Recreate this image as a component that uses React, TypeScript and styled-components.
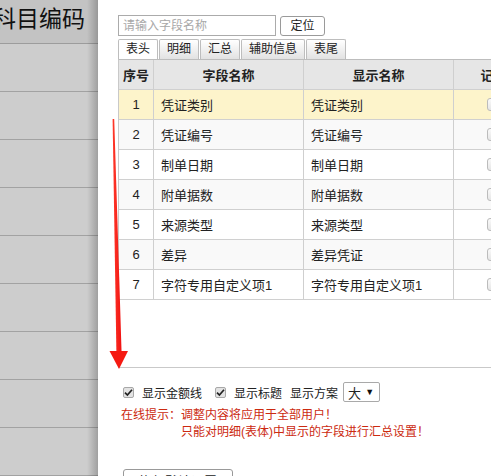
import React from "react";
import styled, { createGlobalStyle } from "styled-components";

const GlobalStyle = createGlobalStyle`
  html, body { margin: 0; padding: 0; overflow: hidden; background: #fff; }
  body {
    font-family: "Liberation Sans", "Noto Sans CJK SC", sans-serif;
    color: #222;
  }
  * { box-sizing: border-box; }
`;

const Page = styled.div`
  position: relative;
  display: flex;
  width: 491px;
  height: 476px;
  overflow: hidden;
`;

const Backdrop = styled.div`
  position: relative;
  width: 98px;
  flex-shrink: 0;
  background: #cdcdcd;
  display: flex;
  flex-direction: column;
  &::after {
    content: "";
    position: absolute;
    top: 0;
    right: 0;
    bottom: 0;
    width: 11px;
    background: linear-gradient(to right, rgba(0, 0, 0, 0), rgba(0, 0, 0, 0.22));
  }
`;

const BackTitle = styled.div`
  height: 58px;
  background: #c3c3c3;
  border-bottom: 1px solid #9c9c9c;
  font-family: "Noto Sans CJK SC", sans-serif;
  font-size: 23px;
  line-height: 34px;
  color: #111;
  white-space: nowrap;
  overflow: hidden;
  text-indent: -7px;
`;

const BackRow = styled.div`
  height: 48px;
  flex-shrink: 0;
  border-bottom: 1px solid #a2a2a2;
`;

const Dialog = styled.div`
  flex: 1;
  background: #fff;
  padding: 15px 0 0 20px;
  overflow: hidden;
  display: flex;
  flex-direction: column;
`;

const SearchRow = styled.div`
  display: flex;
  align-items: flex-start;
  gap: 4px;
  height: 21px;
`;

const SearchInput = styled.input`
  width: 158px;
  height: 21px;
  border: 1px solid #ababab;
  padding: 0 4px;
  font-family: "Liberation Sans", "Noto Sans CJK SC", sans-serif;
  font-size: 12px;
  outline: none;
  &::placeholder { color: #a8a8a8; }
`;

const LocateButton = styled.button`
  margin-top: 1px;
  width: 45px;
  height: 20px;
  border: 1px solid #9a9a9a;
  border-radius: 3px;
  background: #fff;
  font-family: "Liberation Sans", "Noto Sans CJK SC", sans-serif;
  font-size: 12px;
  color: #222;
  padding: 0;
  line-height: 18px;
`;

const TabBar = styled.div`
  display: flex;
  gap: 1px;
  margin-top: 3px;
  height: 21px;
  align-items: flex-end;
`;

const Tab = styled.div<{ $active?: boolean }>`
  height: 20px;
  padding: 0 7px;
  border: 1px solid #bdbdbd;
  border-bottom: none;
  border-radius: 2px 2px 0 0;
  font-size: 12px;
  line-height: 19px;
  color: #222;
  background: ${(p) => (p.$active ? "#fff" : "linear-gradient(#ffffff, #e2e2e2)")};
`;

const TableBox = styled.div`
  width: 420px;
  height: 309px;
  border: 1px solid #c9c9c9;
  border-top: 1px solid #bdbdbd;
  flex-shrink: 0;
`;

const Row = styled.div<{ $bg?: string }>`
  display: grid;
  grid-template-columns: 35px 150px 150px 80px;
  height: 30px;
  background: ${(p) => p.$bg || "#fff"};
  border-bottom: 1px solid #d0d0d0;
`;

const Cell = styled.div<{ $center?: boolean; $head?: boolean }>`
  border-right: 1px solid #cfcfcf;
  display: flex;
  align-items: center;
  justify-content: ${(p) => (p.$center ? "center" : "flex-start")};
  padding-left: ${(p) => (p.$center ? 0 : 7)}px;
  font-size: 13px;
  font-weight: ${(p) => (p.$head ? 700 : 400)};
  color: #222;
  white-space: nowrap;
  overflow: hidden;
`;

const GrayBox = styled.span`
  display: inline-block;
  width: 13px;
  height: 13px;
  border: 1px solid #bcbcbc;
  border-radius: 3px;
  background: linear-gradient(#fafafa, #e6e6e6);
`;

const Options = styled.div`
  display: flex;
  align-items: center;
  height: 20px;
  margin-top: 14px;
  padding-left: 5px;
  font-size: 12px;
  color: #222;
`;

const CheckBox = styled.span`
  display: inline-flex;
  align-items: center;
  justify-content: center;
  width: 11px;
  height: 11px;
  border: 1px solid #a8a8a8;
  border-radius: 2px;
  background: #e3e3e3;
  margin-right: 8px;
`;

const OptLabel = styled.span<{ $gap: number }>`
  margin-right: ${(p) => p.$gap}px;
  white-space: nowrap;
`;

const Select = styled.div`
  display: flex;
  align-items: center;
  justify-content: space-between;
  width: 37px;
  height: 20px;
  border: 1px solid #a9a9a9;
  border-radius: 2px;
  padding: 0 5px 0 4px;
  font-size: 13px;
`;

const Caret = styled.span`
  font-size: 9px;
  color: #111;
`;

const Tips = styled.div`
  margin-top: 5px;
  padding-left: 3px;
  font-size: 12px;
  line-height: 17px;
  color: #cc2a10;
`;

const TipLine = styled.div<{ $indent?: number }>`
  padding-left: ${(p) => p.$indent || 0}px;
  white-space: nowrap;
`;

const ResetButton = styled.button`
  margin-top: 28px;
  margin-left: 5px;
  width: 110px;
  height: 26px;
  border: 1px solid #999;
  border-radius: 3px;
  background: #fff;
  font-family: "Liberation Sans", "Noto Sans CJK SC", sans-serif;
  font-size: 13px;
  color: #222;
  padding: 0;
  text-align: center;
  line-height: 24px;
  flex-shrink: 0;
`;

const Arrow = styled.svg`
  position: absolute;
  left: 0;
  top: 0;
  pointer-events: none;
`;

const rows = [
  ["1", "凭证类别", "凭证类别"],
  ["2", "凭证编号", "凭证编号"],
  ["3", "制单日期", "制单日期"],
  ["4", "附单据数", "附单据数"],
  ["5", "来源类型", "来源类型"],
  ["6", "差异", "差异凭证"],
  ["7", "字符专用自定义项1", "字符专用自定义项1"],
];

const Check = () => (
  <svg width="9" height="9" viewBox="0 0 9 9">
    <path d="M1 4.6 L3.4 7 L8 1.8" fill="none" stroke="#222" strokeWidth="1.7" />
  </svg>
);

export default function App() {
  return (
    <>
      <GlobalStyle />
      <Page>
        <Backdrop>
          <BackTitle>科目编码</BackTitle>
          {Array.from({ length: 9 }).map((_, i) => (
            <BackRow key={i} />
          ))}
        </Backdrop>
        <Dialog>
          <SearchRow>
            <SearchInput placeholder="请输入字段名称" />
            <LocateButton>定位</LocateButton>
          </SearchRow>
          <TabBar>
            <Tab $active>表头</Tab>
            <Tab>明细</Tab>
            <Tab>汇总</Tab>
            <Tab>辅助信息</Tab>
            <Tab>表尾</Tab>
          </TabBar>
          <TableBox>
            <Row $bg="#e6e6e6">
              <Cell $center $head>序号</Cell>
              <Cell $center $head>字段名称</Cell>
              <Cell $center $head>显示名称</Cell>
              <Cell $center $head>记账</Cell>
            </Row>
            {rows.map((r, i) => (
              <Row key={r[0]} $bg={i === 0 ? "#fdf4cb" : i % 2 === 1 ? "#f9f9f9" : "#fff"}>
                <Cell $center>{r[0]}</Cell>
                <Cell>{r[1]}</Cell>
                <Cell>{r[2]}</Cell>
                <Cell $center>
                  <GrayBox />
                </Cell>
              </Row>
            ))}
          </TableBox>
          <Options>
            <CheckBox>
              <Check />
            </CheckBox>
            <OptLabel $gap={13}>显示金额线</OptLabel>
            <CheckBox>
              <Check />
            </CheckBox>
            <OptLabel $gap={8}>显示标题</OptLabel>
            <OptLabel $gap={5}>显示方案</OptLabel>
            <Select>
              大<Caret>▼</Caret>
            </Select>
          </Options>
          <Tips>
            <TipLine>在线提示：调整内容将应用于全部用户！</TipLine>
            <TipLine $indent={60}>只能对明细(表体)中显示的字段进行汇总设置！</TipLine>
          </Tips>
          <ResetButton>恢复默认设置</ResetButton>
        </Dialog>
        <Arrow width="491" height="476" viewBox="0 0 491 476">
          <defs>
            <linearGradient id="ag" x1="0" x2="1" y1="0" y2="0">
              <stop offset="0" stopColor="#ff3a2a" />
              <stop offset="1" stopColor="#f01010" />
            </linearGradient>
          </defs>
          <polygon
            points="112.6,119 114.2,119 121.6,353 116.4,353"
            fill="url(#ag)"
          />
          <polygon points="109.5,351 128,351 119,369" fill="#f51a12" />
        </Arrow>
      </Page>
    </>
  );
}
